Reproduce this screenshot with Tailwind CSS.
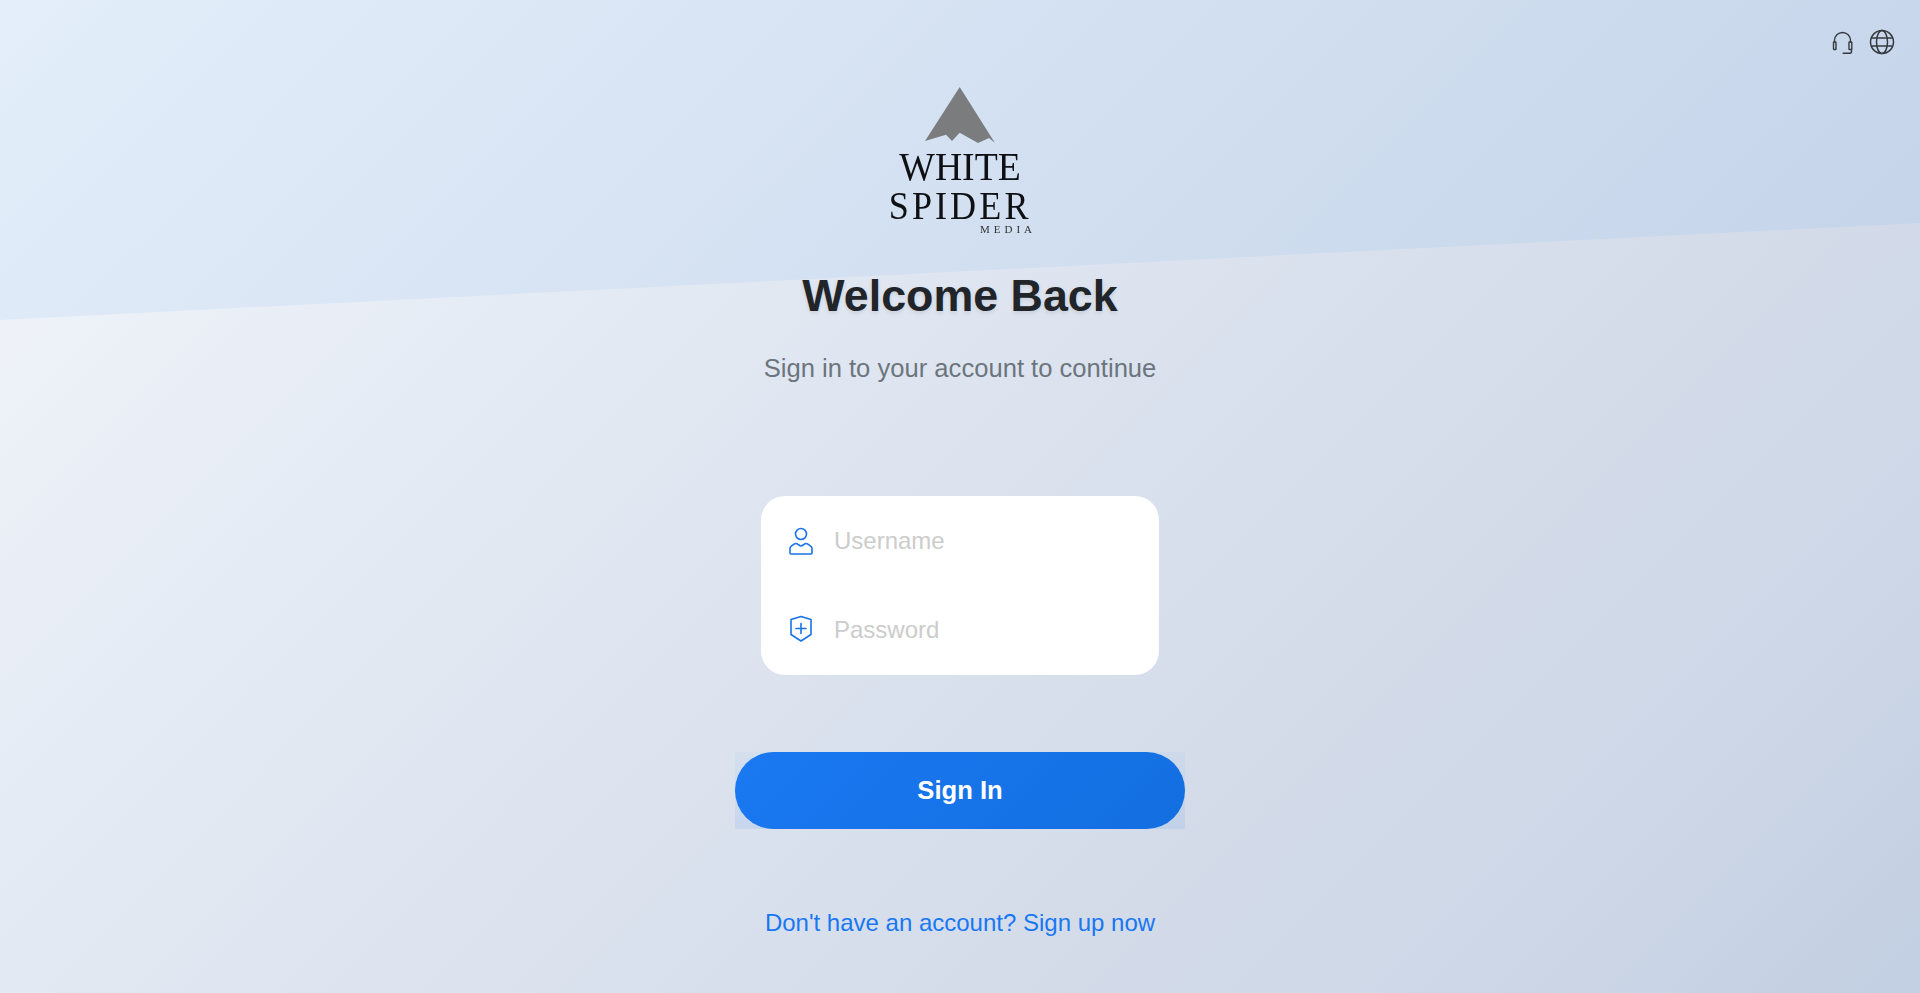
<!DOCTYPE html>
<html lang="en">
<head>
<meta charset="utf-8">
<title>Sign in</title>
<script src="https://cdn.jsdelivr.net/npm/@tailwindcss/browser@4"></script>
</head>
<body class="font-['Liberation_Sans',Arial,sans-serif]">
<div class="relative h-[993px] w-full overflow-hidden bg-[linear-gradient(135deg,#e3eefa_0%,#c6d5ea_72%,#c0d0e6_100%)]">
  <div class="absolute inset-0 bg-[linear-gradient(135deg,#f4f6fb_0%,#e2e9f3_34%,#d3dbe9_70%,#cfd8e8_82%,#c2cfe2_100%)] [clip-path:polygon(0_320px,100%_223px,100%_100%,0_100%)]"></div>
  <div class="absolute right-[25px] top-[29px] flex items-center gap-[13px] text-[#343a40]">
    <svg class="h-[26px] w-[26px]" viewBox="0 0 26 26" fill="none" stroke="currentColor" stroke-width="1.4" stroke-linecap="round" stroke-linejoin="round"><path d="M4.500 13V11.500a8 8 0 0 1 16 0V13"/><rect x="3.500" y="13" width="2.500" height="7.500" rx=".6"/><rect x="19" y="13" width="2.800" height="7.500" rx=".6"/><path d="M21.500 20.500v2a1.800 1.800 0 0 1-1.800 1.800h-6.500"/></svg>
    <svg class="h-[26px] w-[26px]" viewBox="0 0 26 26" fill="none" stroke="currentColor" stroke-width="1.5"><circle cx="13" cy="13" r="11.500"/><ellipse cx="13" cy="13" rx="5.500" ry="11.500"/><path d="M2.500 9h21M2.500 17h21"/></svg>
  </div>
  <div class="relative flex flex-col items-center">
    <div class="mt-[87px] flex h-[150px] w-[150px] flex-col items-center blur-[0.3px]">
      <svg class="h-[56px] w-[70px] shrink-0" viewBox="0 0 70 56"><path d="M34.700 0 70 56 64 51 53 56 34.700 45.700 27 54 21 47.700 0 54Z" fill="#7b7c7e"/></svg>
      <div class="mt-[3px] scale-x-[0.92] font-['Liberation_Serif',serif] text-[41px] leading-[40px] text-[#0e1013]">WHITE</div>
      <div class="mt-[-1px] scale-x-[0.88] whitespace-nowrap font-['Liberation_Serif',serif] text-[41px] leading-[40px] tracking-[3.500px] text-[#0e1013]">SPIDER</div>
      <div class="mt-[-2px] w-full whitespace-nowrap pl-[95px] font-['Liberation_Serif',serif] text-[11px] leading-[12px] tracking-[4px] text-[#333]">MEDIA</div>
    </div>
    <h1 class="mt-[29px] text-[44.800px] font-bold leading-[58px] text-[#212529] [text-shadow:0_2px_4px_rgba(0,0,0,0.1)]">Welcome Back</h1>
    <p class="mt-[26px] text-[25.600px] leading-[36px] text-[#6c757d]">Sign in to your account to continue</p>
    <div class="mt-[110px] flex h-[179px] w-[398px] flex-col justify-between rounded-[24px] bg-white px-[27px] pb-[23px] pt-[22px]">
      <div class="flex h-[45px] items-center gap-[20px]">
        <svg class="h-[28px] w-[26px] shrink-0 text-[#1a73e8]" viewBox="0 0 26 28" fill="none" stroke="currentColor" stroke-width="1.6" stroke-linejoin="round"><circle cx="13" cy="7" r="5.500"/><path d="M2 26v-5c0-1 4-4.500 6-4.500 1.500 0 3.500 2.500 5 2.500s3.500-2.500 5-2.500c2 0 6 3.500 6 4.500v5a1 1 0 0 1-1 1H3a1 1 0 0 1-1-1Z"/></svg>
        <span class="text-[24px] text-[#cccccc]">Username</span>
      </div>
      <div class="flex h-[45px] items-center gap-[20px]">
        <svg class="mt-[-2px] h-[28px] w-[26px] shrink-0 text-[#1a73e8]" viewBox="0 0 26 28" fill="none" stroke="currentColor" stroke-width="1.6" stroke-linejoin="round" stroke-linecap="round"><path d="M13 1.500l10 3v15l-10 6.500-10-6.500v-15Z"/><path d="M13 8.500v10M8 13.500h10"/></svg>
        <span class="text-[24px] text-[#cccccc]">Password</span>
      </div>
    </div>
    <div class="relative mt-[77px] flex h-[77px] w-[450px] items-center justify-center bg-[linear-gradient(to_bottom,rgba(26,115,232,0.03),rgba(26,115,232,0.1))]">
      <div class="flex h-full w-full items-center justify-center rounded-full bg-[linear-gradient(135deg,#1a78f2,#136fe0)] text-[25.600px] font-bold text-white">Sign In</div>
    </div>
    <a class="mt-[76px] text-[24px] leading-[36px] text-[#1877f2]">Don't have an account? Sign up now</a>
  </div>
</div>
</body>
</html>
